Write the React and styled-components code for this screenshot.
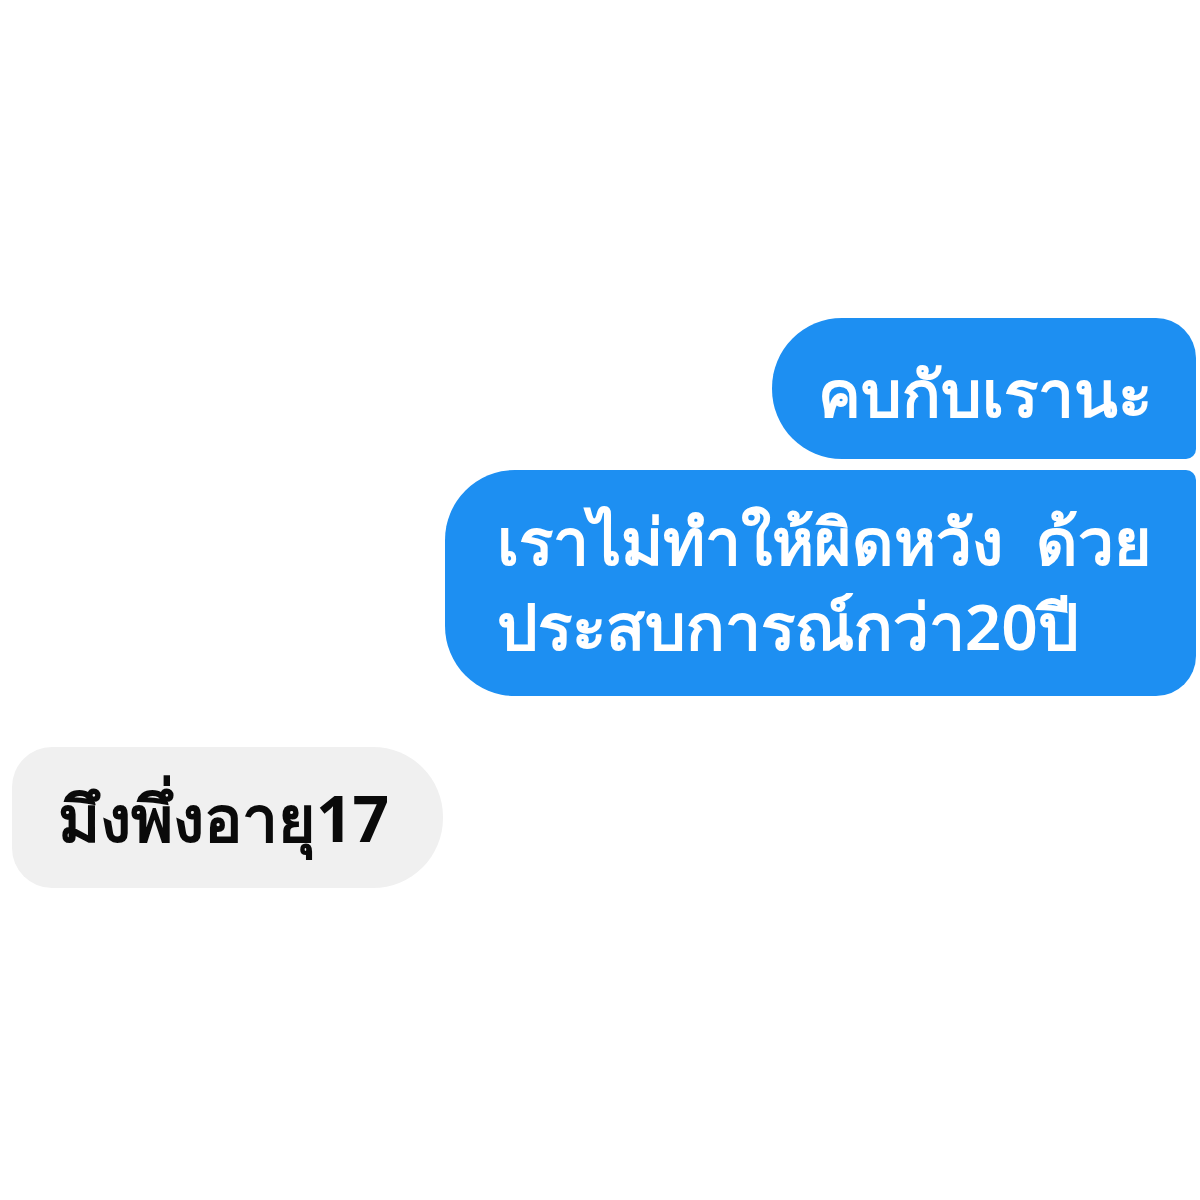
import styled, { createGlobalStyle } from "styled-components";

const Global = createGlobalStyle`
  html, body {
    margin: 0;
    padding: 0;
    background: #fff;
  }
`;

const Page = styled.div`
  width: 1200px;
  height: 1200px;
  box-sizing: border-box;
  padding: 318px 4px 0 12px;
  display: flex;
  flex-direction: column;
  font-family: "Noto Sans", "Liberation Sans", sans-serif;
`;

const Group = styled.div`
  display: flex;
  flex-direction: column;
  align-items: ${(p) => (p.mine ? "flex-end" : "flex-start")};
  gap: 11px;
  margin-bottom: 51px;
`;

const Bubble = styled.div`
  box-sizing: border-box;
  padding: ${(p) => p.pad || "28px 44px 28px 46px"};
  font-size: 64px;
  font-weight: ${(p) => (p.mine ? 600 : 700)};
  line-height: 85px;
  white-space: pre;
  background: ${(p) => (p.mine ? "#1d8ff2" : "#f0f0f0")};
  color: ${(p) => (p.mine ? "#fff" : "#0a0a0a")};
  border-radius: ${(p) => p.radius};
`;

const App = () => {
  return (
    <>
      <Global />
      <Page>
        <Group mine>
          <Bubble mine radius="70px 40px 10px 70px" pad="32px 44px 24px 46px">
            คบกับเรานะ
          </Bubble>
          <Bubble mine radius="70px 10px 40px 70px" pad="28px 44px 28px 52px">
            {"เราไม่ทำให้ผิดหวัง  ด้วย"}
            <br />
            ประสบการณ์กว่า20ปี
          </Bubble>
        </Group>
        <Group>
          <Bubble radius="40px 70px 70px 40px" pad="28px 54px 28px 46px">
            มึงพึ่งอายุ17
          </Bubble>
        </Group>
      </Page>
    </>
  );
};

export default App;
